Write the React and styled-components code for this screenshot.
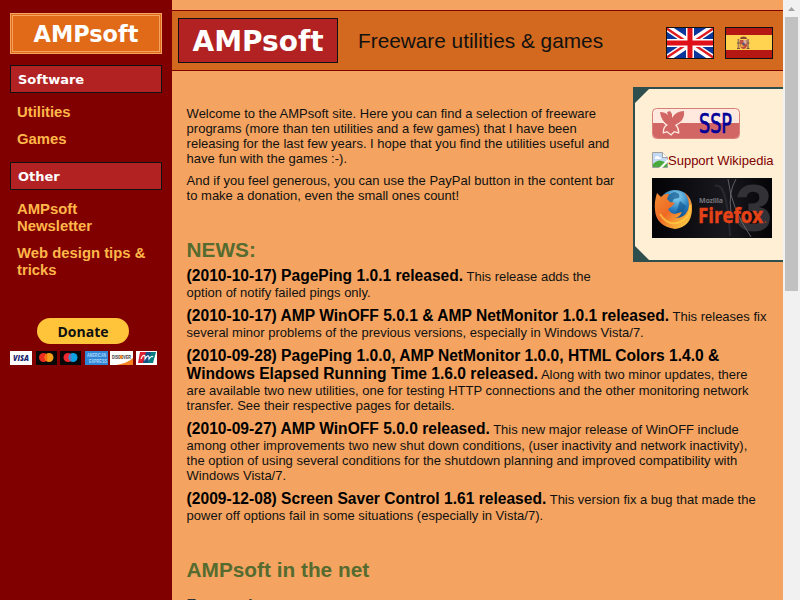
import React from "react";
import styled, { createGlobalStyle } from "styled-components";

const GlobalStyle = createGlobalStyle`
  body {
    margin: 0;
    overflow: hidden;
    background-color: #f4a460;
    color: #111;
    font: 13px/15px "Liberation Sans", Arial, sans-serif;
  }

  svg {
    display: block;
  }
`;

const Page = styled.div`
  display: grid;
  grid-template-columns: 172px 611px 17px;
  height: 600px;
  overflow: hidden;
`;

const Sidebar = styled.aside`
  box-sizing: border-box;
  padding: 13px 10px;
  background-color: #800000;
`;

const SideLogo = styled.div`
  box-sizing: border-box;
  height: 41px;
  margin-bottom: 11px;
  border: 3px double #f4a460;
  background-color: #e06a17;
  color: #fff;
  font: bold 22.4px/36px "DejaVu Sans", Verdana, sans-serif;
  text-align: center;
`;

const SideTitle = styled.h2`
  box-sizing: border-box;
  height: 28px;
  margin: 0 0 11px;
  padding-left: 7px;
  border: 1px solid #111;
  background-color: #b22222;
  color: #fff;
  font: bold 13px/28px "DejaVu Sans", Verdana, sans-serif;
`;

const SideMenu = styled.ul`
  list-style: none;
  margin: 0 0 ${({ $space }) => $space}px;
  padding: 0 7px;
`;

const SideItem = styled.li`
  margin-bottom: 10px;
`;

const SideLink = styled.a`
  color: #ffb74a;
  font-size: 14.85px;
  font-weight: bold;
  line-height: 17px;
  text-decoration: none;
`;

const DonateButton = styled.button`
  display: block;
  width: 92px;
  height: 26px;
  margin: 0 auto 7px 27px;
  padding: 0;
  border: none;
  border-radius: 13px;
  background-color: #ffc439;
  color: #111;
  font: bold 14px/27px "Open Sans", sans-serif;
  letter-spacing: 0;
`;

const Main = styled.main`
  padding-top: 10px;
`;

const Header = styled.header`
  display: flex;
  align-items: center;
  box-sizing: border-box;
  height: 61px;
  padding: 0 10px 0 6px;
  border-top: 1px solid #800000;
  border-bottom: 1px solid #800000;
  background-color: #d2691e;
`;

const Logo = styled.h1`
  box-sizing: border-box;
  width: 160px;
  height: 45px;
  margin: 0 20px 0 0;
  border: 1px solid #111;
  background-color: #b22222;
  color: #fff;
  font: bold 28px/46px "DejaVu Sans", Verdana, sans-serif;
  text-align: center;
`;

const Slogan = styled.div`
  flex: 1;
  font-size: 20.8px;
  line-height: 24px;
`;

const Flags = styled.div`
  display: flex;
  gap: 11px;
  margin-top: 4px;
`;

const Content = styled.div`
  padding: 35px 0 0 14.6px;
`;

const Promo = styled.div`
  float: right;
  position: relative;
  box-sizing: border-box;
  width: 150px;
  height: 175px;
  margin: -19px 0 18px 8px;
  padding: 19px 0 0 17px;
  border: 2px solid #2f4f4f;
  border-right: none;
  background-color: #ffefd5;
`;

const Corner = styled.span`
  position: absolute;
  left: 0;
  ${({ $side }) => $side}: 0;
  border-left: 14px solid #2f4f4f;
  border-${({ $side }) => ($side === "top" ? "bottom" : "top")}: 14px solid transparent;
`;

const BrokenImage = styled.div`
  display: flex;
  align-items: center;
  height: 16px;
  margin: 13px 0 10px;
  color: #800000;
  white-space: nowrap;
`;

const Paragraph = styled.p`
  margin: 0 0 7px;
`;

const Heading = styled.h2`
  margin: 35px 0 5px;
  color: #556b2f;
  font-size: 20.8px;
  line-height: 24px;
`;

const News = styled.p`
  margin: 0 0 7px;
`;

const NewsTitle = styled.strong`
  color: #000;
  font-size: 15.6px;
  line-height: 18px;
`;

const Subheading = styled.h3`
  margin: 15px 0 0;
  color: #333;
  font-size: 15.6px;
  line-height: 18px;
`;

const ScrollBar = styled.div`
  display: flex;
  flex-direction: column;
  align-items: center;
  background-color: #f1f1f1;
`;

const ScrollButton = styled.div`
  display: flex;
  align-items: center;
  justify-content: center;
  width: 17px;
  height: 17px;
`;

const ScrollThumb = styled.div`
  width: 13px;
  height: 274px;
  margin-bottom: auto;
  background-color: #c1c1c1;
`;

const Cards = () => (
  <svg width="148" height="14" viewBox="0 0 148 14">
    <rect width="22" height="14" fill="#fff" />
    <text x="3" y="10" fontFamily="Open Sans" fontSize="8" fontWeight="800" fontStyle="italic" fill="#1a1f71" textLength="16" lengthAdjust="spacingAndGlyphs">VISA</text>
    <rect x="26" width="21" height="14" fill="#080808" />
    <circle cx="33.5" cy="6.5" r="4.5" fill="#eb2c1e" />
    <circle cx="39" cy="6.5" r="4.5" fill="#f79e1b" />
    <path d="M36.2 3v7" stroke="#ff6a10" strokeWidth="2" />
    <rect x="50" width="21" height="14" fill="#080808" />
    <circle cx="58" cy="6.5" r="4.5" fill="#ed2831" />
    <circle cx="63" cy="6.5" r="4.5" fill="#0aa0e4" />
    <path d="M60.5 3v7" stroke="#6976ba" strokeWidth="2" />
    <rect x="75" width="23" height="14" fill="#3186d5" />
    <g fontFamily="Liberation Sans" fontSize="5" fontWeight="bold" fill="#a9d6fa">
      <text x="77" y="6" textLength="19" lengthAdjust="spacingAndGlyphs">AMERICAN</text>
      <text x="79" y="12" textLength="18" lengthAdjust="spacingAndGlyphs">EXPRESS</text>
    </g>
    <rect x="100" width="23" height="14" fill="#fff" />
    <path d="M106 14c7-1 12-3 17-7v7z" fill="#f58220" />
    <text x="102" y="8" fontFamily="Liberation Sans" fontSize="5" fontWeight="bold" fill="#333" textLength="19" lengthAdjust="spacingAndGlyphs">DISCOVER</text>
    <circle cx="111" cy="6" r="1.7" fill="#f58220" />
    <rect x="126" width="21" height="14" fill="#fff" />
    <path d="M130 1h7l-3 11h-6z" fill="#df2030" />
    <path d="M136 1h6l-3 11h-6z" fill="#174e87" />
    <path d="M141 1h5l-3 11h-5z" fill="#087c82" />
    <path d="M131 8q2-5 4-3v3q3-5 4-2v2q3-4 4-2" fill="none" stroke="#fff" strokeWidth="1.1" />
  </svg>
);

const UkFlag = () => (
  <svg width="48" height="32" viewBox="0 0 48 32">
    <rect width="48" height="32" fill="#0b369c" />
    <path d="M0 0l48 32M48 0L0 32" stroke="#fff" strokeWidth="7" />
    <path d="M0 1l21 14M27 17l21 14M48 1L27 15M21 17L0 31" stroke="#e01b22" strokeWidth="2.3" />
    <path d="M24 0v32M0 16h48" stroke="#fff" strokeWidth="8" />
    <path d="M24 0v32M0 16h48" stroke="#df1018" strokeWidth="5" />
    <rect x=".5" y=".5" width="47" height="31" fill="none" stroke="#111" />
  </svg>
);

const SpainFlag = () => (
  <svg width="48" height="32" viewBox="0 0 48 32">
    <rect width="48" height="32" fill="#b51813" />
    <path d="M0 8h48v15H0z" fill="#ffd34f" />
    <path d="M13.500 12v9M23 12v9" stroke="#a67859" strokeWidth="1.8" />
    <path d="M12 21.500h3M21.500 21.500h3M12 16h3M21.500 16h3" stroke="#785041" />
    <path d="M15 13h7v6q-1 3-3.500 3T15 19z" fill="#bf513e" />
    <path d="M15 12q0-2.500 3.500-2.500t3.500 2.500z" fill="#8b4635" />
    <path d="M18.500 13h3v4h-3z" fill="#d9b0a0" />
    <path d="M15.500 17h3v3h-3z" fill="#e4a344" />
    <circle cx="18.500" cy="17" r="1.300" fill="#4e507d" />
    <rect x=".5" y=".5" width="47" height="31" fill="none" stroke="#111" />
  </svg>
);

const SspBadge = () => (
  <svg width="88" height="31" viewBox="0 0 88 31">
    <rect x=".5" y=".5" width="87" height="30" rx="4" fill="#ffe9df" />
    <path d="M1 15h86v11q0 4-4 4H5q-4 0-4-4z" fill="#d16664" />
    <path d="M8 4q5 0 8 3l-1-3 3-1 2 3v4q4-7 12-7 1 7-4 11l-5 3q3 3 3 7l-4-1-3 3-4-3-3 1q0-5 4-7-7-4-8-13z" fill="#d16664" stroke="#ffe9df" strokeWidth="2.6" paintOrder="stroke" />
    <g fontFamily="DejaVu Sans Condensed, DejaVu Sans" fontSize="27" fill="#000099">
      <text x="47" y="25" stroke="#000099" strokeWidth=".7" textLength="33" lengthAdjust="spacingAndGlyphs">SSP</text>
    </g>
    <rect x=".5" y=".5" width="87" height="30" rx="4" fill="none" stroke="#d88078" />
  </svg>
);

const BrokenIcon = () => (
  <svg width="16" height="16" viewBox="0 0 16 16">
    <path d="M.5.5h10l5 5v10H.5z" fill="#c5d9f5" stroke="#a0a0a0" />
    <path d="M10.500.5v5h5" fill="#fff" stroke="#a0a0a0" />
    <path d="M3 6q0-2 2-2t2 1q2 0 2 2H3z" fill="#fff" />
    <path d="M1 15v-3q5-5 9-3l5 2v4z" fill="#49a93d" />
    <path d="M7 16l9-9v3l-6 6z" fill="#fff" />
  </svg>
);

const FirefoxBanner = () => (
  <svg width="120" height="60" viewBox="0 0 120 60">
    <defs>
      <linearGradient id="night" x2="1">
        <stop stopColor="#030306" />
        <stop offset=".6" stopColor="#18181e" />
        <stop offset="1" stopColor="#050507" />
      </linearGradient>
      <radialGradient id="globe" cx=".55" cy=".2" r=".8">
        <stop stopColor="#8ed9f4" />
        <stop offset=".5" stopColor="#267bbd" />
        <stop offset="1" stopColor="#092d70" />
      </radialGradient>
      <linearGradient id="fox" x1="0" x2="1" y2="1">
        <stop stopColor="#f18e32" />
        <stop offset=".45" stopColor="#ef6a25" />
        <stop offset="1" stopColor="#ffe047" />
      </linearGradient>
    </defs>
    <rect width="120" height="60" fill="url(#night)" />
    <text x="83" y="53" fontFamily="Liberation Sans" fontSize="67" fontWeight="bold" fill="#323236">3</text>
    <path d="M76 1q3 29 23 58M84 1q-8 13-5 34" stroke="#777780" strokeWidth="1" fill="none" opacity=".75" />
    <path d="M63 8q12-5 15 50" stroke="#444450" strokeWidth="2" fill="none" opacity=".4" />
    <circle cx="23" cy="29" r="17" fill="url(#globe)" />
    <path d="M22 14q7 1 5 6l-5 1-3 5-5-3 2-6zM28 23l6 5-4 9-6-2z" fill="#155a91" opacity=".7" />
    <path d="M5 15l4 4q4-4 8-3l-2 5 3 3 5 1-4 4-3 2q4 7 10 4l4-1q-3 6-8 6 10 1 14-8 3-9-4-18 9 7 8 18-1 17-17 19Q4 48 3 32q-1-8 2-17z" fill="url(#fox)" />
    <path d="M8 36q8 13 20 8 11-5 10-17" fill="none" stroke="#ffce43" strokeWidth="2" opacity=".7" />
    <text x="47" y="25" fontFamily="Open Sans" fontSize="7" fontWeight="bold" fill="#74747b" textLength="24">Mozilla</text>
    <text x="46" y="45" fontFamily="Open Sans" fontSize="21" fontWeight="bold" fill="#e64217" stroke="#e64217" strokeWidth=".5" textLength="65" lengthAdjust="spacingAndGlyphs">Firefox</text>
    <circle cx="113.500" cy="44" r=".8" fill="#d64522" />
  </svg>
);

const App = () => {
  return (
    <>
      <GlobalStyle />
      <Page>
        <Sidebar>
          <SideLogo>AMPsoft</SideLogo>
          <SideTitle>Software</SideTitle>
          <SideMenu $space={14}>
            <SideItem><SideLink href="#utilities">Utilities</SideLink></SideItem>
            <SideItem><SideLink href="#games">Games</SideLink></SideItem>
          </SideMenu>
          <SideTitle>Other</SideTitle>
          <SideMenu $space={39}>
            <SideItem><SideLink href="#newsletter">AMPsoft<br />Newsletter</SideLink></SideItem>
            <SideItem><SideLink href="#tips">Web design tips &amp;<br />tricks</SideLink></SideItem>
          </SideMenu>
          <DonateButton>Donate</DonateButton>
          <Cards />
        </Sidebar>
        <Main>
          <Header>
            <Logo>AMPsoft</Logo>
            <Slogan>Freeware utilities &amp; games</Slogan>
            <Flags>
              <UkFlag />
              <SpainFlag />
            </Flags>
          </Header>
          <Content>
            <Promo>
              <Corner $side="top" />
              <Corner $side="bottom" />
              <SspBadge />
              <BrokenImage><BrokenIcon />Support Wikipedia</BrokenImage>
              <FirefoxBanner />
            </Promo>
            <Paragraph>
              Welcome to the AMPsoft site. Here you can find a selection of freeware<br />
              programs (more than ten utilities and a few games) that I have been<br />
              releasing for the last few years. I hope that you find the utilities useful and<br />
              have fun with the games :-).
            </Paragraph>
            <Paragraph>
              And if you feel generous, you can use the PayPal button in the content bar<br />
              to make a donation, even the small ones count!
            </Paragraph>
            <Heading>NEWS:</Heading>
            <News>
              <NewsTitle>(2010-10-17) PagePing 1.0.1 released.</NewsTitle> This release adds the<br />
              option of notify failed pings only.
            </News>
            <News>
              <NewsTitle>(2010-10-17) AMP WinOFF 5.0.1 &amp; AMP NetMonitor 1.0.1 released.</NewsTitle> This releases fix<br />
              several minor problems of the previous versions, especially in Windows Vista/7.
            </News>
            <News>
              <NewsTitle>
                (2010-09-28) PagePing 1.0.0, AMP NetMonitor 1.0.0, HTML Colors 1.4.0 &amp;<br />
                Windows Elapsed Running Time 1.6.0 released.
              </NewsTitle> Along with two minor updates, there<br />
              are available two new utilities, one for testing HTTP connections and the other monitoring network<br />
              transfer. See their respective pages for details.
            </News>
            <News>
              <NewsTitle>(2010-09-27) AMP WinOFF 5.0.0 released.</NewsTitle> This new major release of WinOFF include<br />
              among other improvements two new shut down conditions, (user inactivity and network inactivity),<br />
              the option of using several conditions for the shutdown planning and improved compatibility with<br />
              Windows Vista/7.
            </News>
            <News>
              <NewsTitle>(2009-12-08) Screen Saver Control 1.61 released.</NewsTitle> This version fix a bug that made the<br />
              power off options fail in some situations (especially in Vista/7).
            </News>
            <Heading>AMPsoft in the net</Heading>
            <Subheading>Featured</Subheading>
          </Content>
        </Main>
        <ScrollBar>
          <ScrollButton>
            <svg width="7" height="4" viewBox="0 0 7 4"><path d="M0 4L3.500 0 7 4z" fill="#a3a3a3" /></svg>
          </ScrollButton>
          <ScrollThumb />
          <ScrollButton>
            <svg width="7" height="4" viewBox="0 0 7 4"><path d="M0 0h7L3.500 4z" fill="#505050" /></svg>
          </ScrollButton>
        </ScrollBar>
      </Page>
    </>
  );
};

export default App;
